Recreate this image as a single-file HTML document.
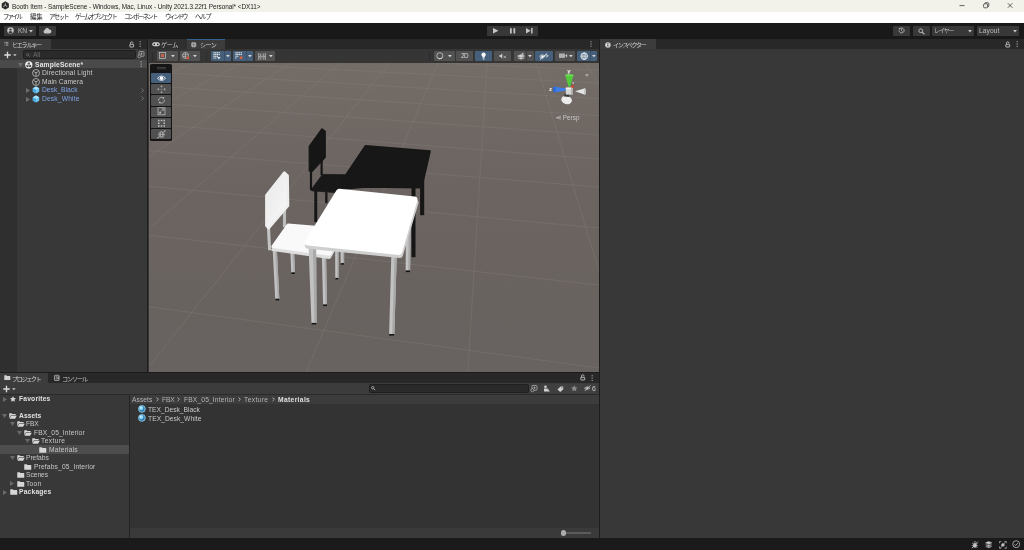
<!DOCTYPE html>
<html><head><meta charset="utf-8"><title>Booth Item - SampleScene - Unity</title>
<style>
*{box-sizing:border-box;margin:0;padding:0}
html,body{width:1024px;height:550px;overflow:hidden;background:#383838}
body{font-family:"Liberation Sans","Noto Sans CJK JP",sans-serif;font-size:6.4px;color:#c8c8c8;position:relative;line-height:1}
.a{position:absolute}
.t{position:absolute;white-space:nowrap;line-height:8px;height:8px;will-change:transform}
.k{letter-spacing:-1.7px}
.b{font-weight:bold}
svg{position:absolute;overflow:visible}
#title{left:0;top:0;width:1024px;height:11.600px;background:#f3f2ea}
#menu{left:0;top:11.600px;width:1024px;height:11.200px;background:#fff}
#menu .t{color:#1a1a1a}
#tb{left:0;top:22.800px;width:1024px;height:16.200px;background:#191919}
.btn{position:absolute;background:#383838;border-radius:1px}
.sb{position:absolute;background:#515151;border-radius:1px;top:11.800px;height:10.400px}
.blue{background:#46607c}
.tabbar{position:absolute;left:0;top:0;background:#282828;height:10px}
.tab{position:absolute;top:0;height:10px;background:#3c3c3c}
.ptb{position:absolute;background:#3c3c3c}
</style></head><body>
<div class="a" id="title">
<svg style="left:1.200px;top:1px" width="8.600" height="8.800" viewBox="0 0 18 18"><path d="M9 .5 L16.500 4.800 V13.200 L9 17.500 L1.500 13.200 V4.800Z" fill="#2a2a2a"/><path d="M9 9V4.500M9 9l4 2.300M9 9l-4 2.300" stroke="#ddd" stroke-width="1.600" fill="none"/></svg>
<div class="t" style="left:12.3px;top:2.8px;font-size:6.4px;letter-spacing:-0.048px;color:#1c1c1c;">Booth Item - SampleScene - Windows, Mac, Linux - Unity 2021.3.22f1 Personal* &lt;DX11&gt;</div>
<svg style="left:955px;top:0" width="69" height="12" viewBox="0 0 69 12"><g stroke="#222" stroke-width=".7" fill="none"><path d="M4.500 5.600h5"/><rect x="28.600" y="3.800" width="4" height="4" rx="1"/><path d="M29.800 3.800v-.3q0-.8.8-.8h2.300q.9 0 .9.900v2.300q0 .8-.8.8h-.4"/><path d="M52.800 3.200l4.600 4.600M57.400 3.200l-4.600 4.600"/></g></svg>
</div>
<div class="a" id="menu">
<div class="t" style="left:2.7px;top:1.4px;font-size:6.4px;letter-spacing:-1.916px;color:#1a1a1a;">ファイル</div>
<div class="t" style="left:29.8px;top:1.4px;font-size:6.4px;letter-spacing:-0.091px;color:#1a1a1a;">編集</div>
<div class="t" style="left:49.4px;top:1.4px;font-size:6.4px;letter-spacing:-1.609px;color:#1a1a1a;">アセット</div>
<div class="t" style="left:75.2px;top:1.4px;font-size:6.4px;letter-spacing:-1.814px;color:#1a1a1a;">ゲームオブジェクト</div>
<div class="t" style="left:124px;top:1.4px;font-size:6.4px;letter-spacing:-1.719px;color:#1a1a1a;">コンポーネント</div>
<div class="t" style="left:165px;top:1.4px;font-size:6.4px;letter-spacing:-2.151px;color:#1a1a1a;">ウィンドウ</div>
<div class="t" style="left:194.8px;top:1.4px;font-size:6.4px;letter-spacing:-1.257px;color:#1a1a1a;">ヘルプ</div>
</div>
<div class="a" id="tb">
<div class="btn" style="left:4px;top:3px;width:32px;height:10px"></div>
<div class="btn" style="left:39px;top:3px;width:16.5px;height:10px"></div>
<div class="btn" style="left:487px;top:3px;width:16.6px;height:10px"></div>
<div class="btn" style="left:504px;top:3px;width:16.6px;height:10px"></div>
<div class="btn" style="left:521px;top:3px;width:16.6px;height:10px"></div>
<div class="btn" style="left:893px;top:3px;width:17px;height:10px"></div>
<div class="btn" style="left:913px;top:3px;width:16.5px;height:10px"></div>
<div class="btn" style="left:932px;top:3px;width:42px;height:10px"></div>
<div class="btn" style="left:977px;top:3px;width:42px;height:10px"></div>
<svg style="left:7px;top:4.500px" width="7" height="7" viewBox="0 0 14 14"><circle cx="7" cy="7" r="6.500" fill="#c4c4c4"/><circle cx="7" cy="5.200" r="2.300" fill="#383838"/><path d="M2.800 11q.8-3.200 4.200-3.200t4.200 3.200q-1.800 1.800-4.200 1.800t-4.200-1.800z" fill="#383838"/></svg>
<div class="t" style="left:17.7px;top:4.1px;font-size:6.7px;letter-spacing:-0.248px;color:#bdbdbd;">KN</div>
<svg style="left:29.300px;top:7px" width="4" height="2.400" viewBox="0 0 8 5"><path d="M0 0h8l-4 5z" fill="#c4c4c4"/></svg>
<svg style="left:42.800px;top:5.300px" width="8.600" height="5.400" viewBox="0 0 16 10"><path d="M4 10a3.200 3.200 0 0 1-.5-6.300A4.300 4.300 0 0 1 11.800 3 3.500 3.500 0 0 1 12.500 10z" fill="#c4c4c4"/></svg>
<svg style="left:492.500px;top:5.200px" width="5.500" height="5.600" viewBox="0 0 10 10"><path d="M0 0l10 5-10 5z" fill="#c4c4c4"/></svg>
<svg style="left:509.700px;top:5.200px" width="5.200" height="5.600" viewBox="0 0 10 10"><path d="M0 0h3.400v10h-3.400zM6.600 0h3.400v10h-3.400z" fill="#c4c4c4"/></svg>
<svg style="left:526px;top:5.200px" width="6.600" height="5.600" viewBox="0 0 12 10"><path d="M0 0l8.500 5-8.500 5zM9.300 0h2.700v10h-2.700z" fill="#c4c4c4"/></svg>
<svg style="left:898px;top:4.500px" width="7" height="7" viewBox="0 0 14 14"><path d="M2.200 7a5 5 0 1 0 1.500-3.600" fill="none" stroke="#c4c4c4" stroke-width="1.600"/><path d="M.8 2.200l3.600.2-.4 3.400z" fill="#c4c4c4"/><path d="M7 4v3.300l2.200 1.300" fill="none" stroke="#c4c4c4" stroke-width="1.400"/></svg>
<svg style="left:917.500px;top:4.800px" width="7" height="7" viewBox="0 0 14 14"><circle cx="5.500" cy="5.500" r="3.800" fill="none" stroke="#c4c4c4" stroke-width="1.700"/><path d="M8.300 8.300l4.500 4.500" stroke="#c4c4c4" stroke-width="2.200"/></svg>
<div class="t" style="left:934.2px;top:4px;font-size:6.4px;letter-spacing:-1.694px;color:#bdbdbd;">レイヤー</div>
<svg style="left:968px;top:7px" width="4" height="2.400" viewBox="0 0 8 5"><path d="M0 0h8l-4 5z" fill="#c4c4c4"/></svg>
<div class="t" style="left:978.9px;top:4.1px;font-size:6.7px;letter-spacing:0.051px;color:#bdbdbd;">Layout</div>
<svg style="left:1013px;top:7px" width="4" height="2.400" viewBox="0 0 8 5"><path d="M0 0h8l-4 5z" fill="#c4c4c4"/></svg>
</div>
<div class="a" id="hier" style="left:0;top:39px;width:147.200px;height:333.200px;background:#383838">
<div class="tabbar" style="width:147.200px"><div class="tab" style="left:0;width:50.800px"></div></div>
<svg style="left:4.200px;top:3.400px" width="4.400" height="3.600" viewBox="0 0 11 9"><path d="M0 1h2M3.500 1h7.500M1.500 4.500h1.500M4.500 4.500h6.500M1.500 8h1.500M4.500 8h6.500" stroke="#c4c4c4" stroke-width="1.700"/></svg>
<div class="t" style="left:11.5px;top:2.0px;font-size:6.1px;letter-spacing:-1.294px;color:#d0d0d0;">ヒエラルキー</div>
<svg style="left:128.8px;top:1.6px" width="5.400" height="6.600" viewBox="0 0 10 12"><path d="M2.800 5.800V3.600a2.300 2.300 0 0 1 4.600 0v.6" fill="none" stroke="#c4c4c4" stroke-width="1.500"/><rect x="1.600" y="6" width="7" height="5" rx=".6" fill="none" stroke="#c4c4c4" stroke-width="1.700"/></svg>
<svg style="left:139.3px;top:2px" width="2.300" height="6.200" viewBox="0 0 4 12"><rect x="1" y=".5" width="2" height="2" fill="#bdbdbd"/><rect x="1" y="5" width="2" height="2" fill="#bdbdbd"/><rect x="1" y="9.500" width="2" height="2" fill="#bdbdbd"/></svg>
<div class="ptb" style="left:0;top:10px;width:147.200px;height:11px"></div>
<svg style="left:3.7px;top:11.5px" width="13" height="8" viewBox="0 0 26 16"><path d="M7 1.500v13M.5 8h13" stroke="#dcdcdc" stroke-width="2.700" fill="none"/><path d="M18 6.300h7.400l-3.700 4.200z" fill="#c4c4c4"/></svg>
<div class="a" style="left:23px;top:11.200px;width:112.800px;height:8.600px;background:#2a2a2a;border:.5px solid #1f1f1f;border-radius:1.500px"></div>
<svg style="left:25.500px;top:13.500px" width="5" height="4.500" viewBox="0 0 10 9"><circle cx="3.200" cy="3.200" r="2.300" fill="none" stroke="#7a7a7a" stroke-width="1.300"/><path d="M5 5l2.500 2.500" stroke="#7a7a7a" stroke-width="1.500"/><path d="M7.300 3.500h2.700l-1.350 1.600z" fill="#7a7a7a"/></svg>
<div class="t" style="left:33.2px;top:11.9px;font-size:6.7px;letter-spacing:-0.146px;color:#6e6e6e;">All</div>
<svg style="left:137px;top:11.500px" width="7.500" height="7.500" viewBox="0 0 15 15"><rect x="4" y="1" width="10" height="9.500" rx="1.500" fill="none" stroke="#bdbdbd" stroke-width="1.400"/><circle cx="4.800" cy="10.500" r="3" fill="#3c3c3c" stroke="#bdbdbd" stroke-width="1.300"/><path d="M9 3v5M6.500 5.500h5" stroke="#bdbdbd" stroke-width="1.200"/></svg>
<div class="a" style="left:0;top:21px;width:17px;height:312.500px;background:#2f2f2f"></div>
<div class="a" style="left:0;top:21px;width:147.200px;height:8.300px;background:#4a4a4a"></div>
<svg style="left:18.3px;top:23.6px" width="5" height="4" viewBox="0 0 10 8"><path d="M0 0h10l-5 8z" fill="#6e6e6e"/></svg>
<svg style="left:24.900px;top:21.500px" width="7.600" height="7.600" viewBox="0 0 16 16"><circle cx="8" cy="8" r="7.600" fill="#f2f2f2"/><g fill="#2e2e2e"><path d="M8 8.300L5.700 7V4.300L8 2.800 10.300 4.300V7z"/><path d="M7.600 9L5.300 7.700 3 9v2.700l2.300 1.300 2.300-1.300z" /><path d="M8.400 9l2.300-1.300L13 9v2.700l-2.300 1.300-2.300-1.300z"/></g><path d="M8 3.500v4.500M8 8l-3.800 2.300M8 8l3.800 2.300" stroke="#f2f2f2" stroke-width=".9"/></svg>
<div class="t b" style="left:34.9px;top:21.9px;font-size:6.7px;letter-spacing:0.183px;color:#e4e4e4;">SampleScene*</div>
<svg style="left:139.6px;top:22.4px" width="2.300" height="6.200" viewBox="0 0 4 12"><rect x="1" y=".5" width="2" height="2" fill="#bdbdbd"/><rect x="1" y="5" width="2" height="2" fill="#bdbdbd"/><rect x="1" y="9.500" width="2" height="2" fill="#bdbdbd"/></svg>
<svg style="left:32px;top:30.2px" width="8" height="8" viewBox="0 0 16 16"><circle cx="8" cy="8" r="7" fill="none" stroke="#c4c4c4" stroke-width="1.500"/><path d="M3 5l5 2.500 5-2.500M8 7.500v6.500" fill="none" stroke="#c4c4c4" stroke-width="1.500"/></svg>
<div class="t" style="left:41.6px;top:30.4px;font-size:6.7px;letter-spacing:0.156px;color:#c8c8c8;">Directional Light</div>
<svg style="left:32px;top:38.73px" width="8" height="8" viewBox="0 0 16 16"><circle cx="8" cy="8" r="7" fill="none" stroke="#c4c4c4" stroke-width="1.500"/><path d="M3 5l5 2.500 5-2.500M8 7.500v6.500" fill="none" stroke="#c4c4c4" stroke-width="1.500"/></svg>
<div class="t" style="left:41.6px;top:38.93px;font-size:6.7px;letter-spacing:0.078px;color:#c8c8c8;">Main Camera</div>
<svg style="left:26.4px;top:49.16px" width="4" height="5" viewBox="0 0 8 10"><path d="M0 0l8 5-8 5z" fill="#6e6e6e"/></svg>
<svg style="left:32px;top:47.26px" width="8" height="8" viewBox="0 0 16 16"><path d="M8 .8l6.400 3.600v7.200L8 15.200 1.600 11.600V4.400z" fill="#6fc6f0"/><path d="M8 .8l6.400 3.600L8 8 1.600 4.400z" fill="#a9e2ff"/><path d="M8 8v7.200l-6.400-3.600V4.400z" fill="#4aa8dc"/></svg>
<div class="t" style="left:41.6px;top:47.46px;font-size:6.7px;letter-spacing:0.029px;color:#7ea2e4;">Desk_Black</div>
<svg style="left:141.300px;top:48.96px" width="3" height="5" viewBox="0 0 6 10"><path d="M1 1l4 4-4 4" fill="none" stroke="#8a8a8a" stroke-width="1.400"/></svg>
<svg style="left:26.4px;top:57.69px" width="4" height="5" viewBox="0 0 8 10"><path d="M0 0l8 5-8 5z" fill="#6e6e6e"/></svg>
<svg style="left:32px;top:55.79px" width="8" height="8" viewBox="0 0 16 16"><path d="M8 .8l6.400 3.600v7.200L8 15.200 1.600 11.600V4.400z" fill="#6fc6f0"/><path d="M8 .8l6.400 3.600L8 8 1.600 4.400z" fill="#a9e2ff"/><path d="M8 8v7.200l-6.400-3.600V4.400z" fill="#4aa8dc"/></svg>
<div class="t" style="left:41.6px;top:55.99px;font-size:6.7px;letter-spacing:0.154px;color:#7ea2e4;">Desk_White</div>
<svg style="left:141.300px;top:57.49px" width="3" height="5" viewBox="0 0 6 10"><path d="M1 1l4 4-4 4" fill="none" stroke="#8a8a8a" stroke-width="1.400"/></svg>
</div>
<div class="a" style="left:147.200px;top:39px;width:1.300px;height:334px;background:#1c1c1c"></div>
<div class="a" id="scene" style="left:148.500px;top:39px;width:450.500px;height:333.200px;background:#383838;overflow:hidden">
<div class="tabbar" style="width:450.500px"><div class="tab" style="left:0;width:38.500px;background:#2f2f2f"></div><div class="tab" style="left:38.500px;width:37.500px"></div><div class="a" style="left:38.500px;top:-.3px;width:37.500px;height:1.100px;background:#33628f"></div></div>
<svg style="left:3.500px;top:3.300px" width="8" height="4.600" viewBox="0 0 16 9"><rect x=".5" y=".5" width="15" height="8" rx="4" fill="#d0d0d0"/><circle cx="4.600" cy="4.500" r="1.700" fill="#2f2f2f"/><circle cx="11.400" cy="4.500" r="1.700" fill="#2f2f2f"/></svg>
<div class="t" style="left:12.4px;top:2.0px;font-size:6.1px;letter-spacing:-0.370px;color:#c8c8c8;">ゲーム</div>
<svg style="left:42.300px;top:2.600px" width="5.600" height="5.600" viewBox="0 0 12 12"><g fill="none" stroke="#c8c8c8" stroke-width="1.300"><rect x="2" y="2" width="8" height="8"/><path d="M0 4h12M0 8h12M4 0v12M8 0v12"/></g></svg>
<div class="t" style="left:51px;top:2.0px;font-size:6.1px;letter-spacing:-0.561px;color:#d8d8d8;">シーン</div>
<svg style="left:441.700px;top:2px" width="2" height="6" viewBox="0 0 4 12"><rect x="1" y=".5" width="2" height="2" fill="#bdbdbd"/><rect x="1" y="5" width="2" height="2" fill="#bdbdbd"/><rect x="1" y="9.500" width="2" height="2" fill="#bdbdbd"/></svg>
<div class="a" style="left:0;top:10px;width:450.500px;height:13.800px;background:#353535"></div>
<div class="a" style="left:3px;top:12.500px;width:3px;height:9px;background:repeating-linear-gradient(90deg,#2b2b2b 0 .8px,transparent .8px 1.600px)"></div>
<div class="a" style="left:57px;top:12.500px;width:3px;height:9px;background:repeating-linear-gradient(90deg,#2b2b2b 0 .8px,transparent .8px 1.600px)"></div>
<div class="a" style="left:280.500px;top:12.500px;width:3px;height:9px;background:repeating-linear-gradient(90deg,#2b2b2b 0 .8px,transparent .8px 1.600px)"></div>
<div class="sb" style="left:8.5px;width:20.8px"></div>
<div class="sb" style="left:31.2px;width:20.3px"></div>
<div class="sb blue" style="left:62.5px;width:20.0px"></div>
<div class="sb blue" style="left:84.5px;width:20.0px"></div>
<div class="sb" style="left:106.5px;width:20.0px"></div>
<svg style="left:10.800px;top:13.400px" width="7" height="7" viewBox="0 0 14 14"><rect x="1" y="1" width="12" height="12" fill="none" stroke="#d0d0d0" stroke-width="1.300"/><rect x="4.300" y="4.300" width="5.400" height="5.400" fill="#c4553c" stroke="#d87a60" stroke-width="1"/></svg>
<svg style="left:22.5px;top:16px" width="3.800" height="2.300" viewBox="0 0 8 5"><path d="M0 0h8l-4 5z" fill="#d8d8d8"/></svg>
<svg style="left:33.200px;top:13.200px" width="8" height="8" viewBox="0 0 16 16"><circle cx="7" cy="7" r="6" fill="none" stroke="#d0d0d0" stroke-width="1.300"/><path d="M7 1v12M1.200 5.500h11.600M1.500 9h7" stroke="#d0d0d0" stroke-width="1.100" fill="none"/><circle cx="11.500" cy="11.500" r="3" fill="#cf5a3c"/></svg>
<svg style="left:44.7px;top:16px" width="3.800" height="2.300" viewBox="0 0 8 5"><path d="M0 0h8l-4 5z" fill="#d8d8d8"/></svg>
<svg style="left:64.800px;top:13.300px" width="8" height="8" viewBox="0 0 16 16"><g fill="#ececec"><rect x="1.0" y="0.5" width="2" height="2"/><rect x="4.6" y="0.5" width="2" height="2"/><rect x="8.2" y="0.5" width="2" height="2"/><rect x="11.8" y="0.5" width="2" height="2"/><rect x="1.0" y="4.1" width="2" height="2"/><rect x="4.6" y="4.1" width="2" height="2"/><rect x="8.2" y="4.1" width="2" height="2"/><rect x="11.8" y="4.1" width="2" height="2"/><rect x="1.0" y="7.7" width="2" height="2"/><rect x="4.6" y="7.7" width="2" height="2"/><rect x="8.2" y="7.7" width="2" height="2"/><rect x="1.0" y="11.3" width="2" height="2"/><rect x="4.6" y="11.3" width="2" height="2"/></g><path d="M1.500 1.500h12M1.500 5h12M1.500 8.700h8M2 1v11M5.600 1v11M9.200 1v8" stroke="#ececec" stroke-width=".6" fill="none"/><path d="M8.500 10h6.500l-3.250 5z" fill="#ececec"/></svg>
<div class="a" style="left:75.3px;top:11.800px;width:.7px;height:10.400px;background:#3a4f66"></div>
<svg style="left:77.0px;top:16px" width="3.800" height="2.300" viewBox="0 0 8 5"><path d="M0 0h8l-4 5z" fill="#d8d8d8"/></svg>
<svg style="left:86.800px;top:13.300px" width="8" height="8" viewBox="0 0 16 16"><g fill="#ececec"><rect x="1.0" y="0.5" width="2" height="2"/><rect x="4.6" y="0.5" width="2" height="2"/><rect x="8.2" y="0.5" width="2" height="2"/><rect x="11.8" y="0.5" width="2" height="2"/><rect x="1.0" y="4.1" width="2" height="2"/><rect x="4.6" y="4.1" width="2" height="2"/><rect x="8.2" y="4.1" width="2" height="2"/><rect x="11.8" y="4.1" width="2" height="2"/><rect x="1.0" y="7.7" width="2" height="2"/><rect x="4.6" y="7.7" width="2" height="2"/><rect x="1.0" y="11.3" width="2" height="2"/></g><path d="M1.500 1.500h12M1.500 5h12M2 1v11M5.600 1v8" stroke="#ececec" stroke-width=".6" fill="none"/><path d="M8.500 9.500a3.500 3.500 0 1 0 7 0h-2a1.500 1.500 0 1 1-3 0z" fill="#d8603f" transform="rotate(-45 12 10.500)"/><circle cx="12" cy="11.500" r="2.600" fill="#d8603f"/></svg>
<div class="a" style="left:97.3px;top:11.800px;width:.7px;height:10.400px;background:#3a4f66"></div>
<svg style="left:99.0px;top:16px" width="3.800" height="2.300" viewBox="0 0 8 5"><path d="M0 0h8l-4 5z" fill="#d8d8d8"/></svg>
<svg style="left:109px;top:13.600px" width="8" height="7" viewBox="0 0 16 14"><path d="M1.500 0v14M14.500 0v14M5.500 1v5M10.500 1v5M1.500 7.500h13M5.500 9v4M10.500 9v4" stroke="#d0d0d0" stroke-width="1.500" fill="none"/></svg>
<svg style="left:120.3px;top:16px" width="3.800" height="2.300" viewBox="0 0 8 5"><path d="M0 0h8l-4 5z" fill="#d8d8d8"/></svg>
<div class="sb" style="left:285.2px;width:20.9px"></div>
<div class="sb" style="left:307.7px;width:16.6px"></div>
<div class="sb blue" style="left:326.7px;width:17.1px"></div>
<div class="sb" style="left:345.9px;width:16.9px"></div>
<div class="sb" style="left:365.3px;width:20.0px"></div>
<div class="sb blue" style="left:386.9px;width:17.4px"></div>
<div class="sb" style="left:406.3px;width:20.5px"></div>
<div class="sb blue" style="left:428.4px;width:19.9px"></div>
<svg style="left:287.500px;top:13.200px" width="7.600" height="7.600" viewBox="0 0 16 16"><circle cx="8" cy="8" r="6.500" fill="none" stroke="#d8d8d8" stroke-width="1.500"/><path d="M3 10.500a5.500 5.500 0 0 0 10-1 5 5 0 0 1-10 1z" fill="#d8d8d8"/></svg>
<svg style="left:299.7px;top:16px" width="3.800" height="2.300" viewBox="0 0 8 5"><path d="M0 0h8l-4 5z" fill="#d8d8d8"/></svg>
<div class="t" style="left:312.6px;top:13px;font-size:6.4px;letter-spacing:-0.586px;color:#d8d8d8;">2D</div>
<svg style="left:332.800px;top:13px" width="5.200" height="8" viewBox="0 0 10 16"><path d="M5 .8a4.300 4.300 0 0 1 2.400 7.900v2.300h-4.800v-2.300A4.300 4.300 0 0 1 5 .8z" fill="#fff"/><path d="M3 12.500h4M3.500 14.500h3" stroke="#fff" stroke-width="1.300"/></svg>
<svg style="left:350.500px;top:13.800px" width="8" height="7" viewBox="0 0 16 14"><path d="M1 4h2.500l3-3v10l-3-3h-2.500z" fill="#d0d0d0"/><path d="M9 5.500l5 5M14 5.500l-5 5" stroke="#d0d0d0" stroke-width="1.300"/></svg>
<svg style="left:368.500px;top:13.300px" width="8" height="8" viewBox="0 0 16 16"><path d="M1 8l7-3 7 3-7 3zM1 11.500l7 3 7-3" fill="#d0d0d0" stroke="#d0d0d0" stroke-width="1"/><path d="M11.500 1l.8 1.800 1.900.2-1.400 1.300.4 1.900-1.700-1-1.700 1 .4-1.900-1.400-1.300 1.900-.2z" fill="#d0d0d0"/></svg>
<div class="a" style="left:377.5px;top:11.800px;width:.7px;height:10.400px;background:#3a3a3a"></div>
<svg style="left:379.7px;top:16px" width="3.800" height="2.300" viewBox="0 0 8 5"><path d="M0 0h8l-4 5z" fill="#d8d8d8"/></svg>
<svg style="left:390.500px;top:13.600px" width="10" height="7" viewBox="0 0 20 14"><path d="M1.500 7q5-6.500 10 0-5 6.500-10 0z" fill="none" stroke="#fff" stroke-width="1.500"/><circle cx="6.500" cy="7" r="2" fill="#fff"/><path d="M2 13l14-12" stroke="#fff" stroke-width="1.700"/><path d="M13 4.500q3-1 5.500 1-2 3-5 2.500" fill="none" stroke="#fff" stroke-width="1.300"/></svg>
<svg style="left:410px;top:14.400px" width="8.400" height="5.400" viewBox="0 0 17 11"><rect x=".5" y="1" width="3" height="9" fill="#d0d0d0"/><rect x="4.500" y="1" width="3" height="9" fill="#d0d0d0"/><rect x="8.500" y="1" width="3" height="9" fill="#d0d0d0"/><path d="M12.500 5.500l4-3.500v7z" fill="#d0d0d0"/></svg>
<svg style="left:420.8px;top:16px" width="3.800" height="2.300" viewBox="0 0 8 5"><path d="M0 0h8l-4 5z" fill="#d8d8d8"/></svg>
<svg style="left:431.500px;top:13px" width="8.400" height="8.400" viewBox="0 0 16 16"><circle cx="8" cy="8" r="6.300" fill="none" stroke="#fff" stroke-width="1.600"/><path d="M8 1.500v13M1.500 8h13" stroke="#fff" stroke-width="1.200"/><ellipse cx="8" cy="8" rx="3" ry="6.300" fill="none" stroke="#fff" stroke-width="1.100"/></svg>
<div class="a" style="left:441.2px;top:11.800px;width:.7px;height:10.400px;background:#3a4f66"></div>
<svg style="left:443.1px;top:16px" width="3.800" height="2.300" viewBox="0 0 8 5"><path d="M0 0h8l-4 5z" fill="#d8d8d8"/></svg>
<div class="a" id="vp" style="left:0;top:23.800px;width:450.500px;height:309.400px;background:linear-gradient(#736c67,#6b6460 40%,#686260)">
<svg style="left:0;top:0;overflow:hidden" width="450.500" height="309.400" viewBox="0 0 450.500 309.400"><g stroke="#8a837d" stroke-width=".6" opacity=".55"><line x1="484.4" y1="-0.8" x2="804.6" y2="310.2"/><line x1="435.7" y1="-0.8" x2="642.6" y2="310.2"/><line x1="386.9" y1="-0.8" x2="480.7" y2="310.2"/><line x1="338.1" y1="-0.8" x2="318.7" y2="310.2"/><line x1="289.4" y1="-0.8" x2="156.7" y2="310.2"/><line x1="240.6" y1="-0.8" x2="-5.2" y2="310.2"/><line x1="191.8" y1="-0.8" x2="-167.2" y2="310.2"/><line x1="143.0" y1="-0.8" x2="-329.2" y2="310.2"/><line x1="94.3" y1="-0.8" x2="-491.1" y2="310.2"/><line x1="45.5" y1="-0.8" x2="-653.1" y2="310.2"/><line x1="-3.3" y1="-0.8" x2="-815.1" y2="310.2"/><line x1="-52.1" y1="-0.8" x2="-977.0" y2="310.2"/><line x1="-0.5" y1="-12.8" x2="451.5" y2="7.2"/><line x1="-0.5" y1="-2.9" x2="451.5" y2="20.2"/><line x1="-0.5" y1="8.8" x2="451.5" y2="35.8"/><line x1="-0.5" y1="22.8" x2="451.5" y2="52.7"/><line x1="-0.5" y1="39.8" x2="451.5" y2="72.2"/><line x1="-0.5" y1="60.9" x2="451.5" y2="96.2"/><line x1="-0.5" y1="87.7" x2="451.5" y2="124.2"/><line x1="-0.5" y1="123.2" x2="451.5" y2="165.2"/><line x1="-0.5" y1="172.2" x2="451.5" y2="222.2"/><line x1="-0.5" y1="243.7" x2="451.5" y2="305.2"/><line x1="-0.5" y1="358.8" x2="451.5" y2="439.2"/></g>
<g><rect x="165.3" y="127.2" width="2.9" height="32.0" fill="#161616" /><rect x="176.2" y="129.2" width="2.3" height="11.0" fill="#161616" /><rect x="160.9" y="107.2" width="2.2" height="20.0" fill="#161616" /><rect x="171.5" y="93.2" width="2.2" height="19.0" fill="#161616" /><polygon points="160.1,83.2 172.8,65.6 176.3,68.0 176.3,94.7 161.9,110.0 160.1,107.7" fill="#161616" stroke="#161616" stroke-width="1" stroke-linejoin="round"/><polygon points="162.7,126.0 173.5,111.4 198.5,111.8 189.5,127.7 185.5,129.5 162.7,127.8" fill="#181818" stroke="#181818" stroke-width=".8" stroke-linejoin="round"/><rect x="271.1" y="117.2" width="4.1" height="35.0" fill="#161616" /><rect x="262.5" y="123.2" width="4.0" height="71.0" fill="#161616" /><polygon points="216.5,82.8 281.1,88.1 272.7,124.8 217.5,124.0 190.5,126.2 197.0,111.6" fill="#171717" stroke="#171717" stroke-width="1.600" stroke-linejoin="round"/><polygon points="141.3,187.2 145.1,187.2 145.9,210.6 142.3,210.6" fill="#c2c2c2" /><polygon points="143.5,187.2 145.1,187.2 145.9,210.6 144.4,210.6" fill="#a9a9a9" /><polygon points="142.3,209.3 145.9,209.3 145.9,211.0 142.3,211.0" fill="#141414" /><polygon points="186.1,183.2 189.5,183.2 189.5,216.2 186.3,216.2" fill="#c2c2c2" /><polygon points="188.1,183.2 189.5,183.2 189.5,216.2 188.2,216.2" fill="#a9a9a9" /><polygon points="186.3,214.9 189.5,214.9 189.5,216.6 186.3,216.6" fill="#141414" /><polygon points="123.7,187.2 127.9,187.2 130.4,237.0 126.3,237.0" fill="#c2c2c2" /><polygon points="126.1,187.2 127.9,187.2 130.4,237.0 128.7,237.0" fill="#a9a9a9" /><polygon points="126.3,235.7 130.4,235.7 130.4,237.4 126.3,237.4" fill="#141414" /><polygon points="172.9,193.2 177.1,193.2 178.0,242.7 174.1,242.7" fill="#c2c2c2" /><polygon points="175.3,193.2 177.1,193.2 178.0,242.7 176.4,242.7" fill="#a9a9a9" /><polygon points="174.1,241.4 178.0,241.4 178.0,243.1 174.1,243.1" fill="#141414" /><polygon points="117.7,161.2 120.9,161.2 122.1,187.2 119.1,187.2" fill="#c4c4c4" /><rect x="133.9" y="141.2" width="3.2" height="23.0" fill="#bcbcbc" /><defs><linearGradient id="cb" x1="0" y1="0" x2="1" y2="1"><stop offset="0" stop-color="#e9e9e9"/><stop offset="1" stop-color="#f8f8f8"/></linearGradient></defs><polygon points="117.3,132.2 135.3,109.5 138.7,112.6 139.1,142.6 119.7,165.2 117.3,162.7" fill="url(#cb)" stroke="#eeeeee" stroke-width="2.400" stroke-linejoin="round"/><polygon points="123.8,186.6 138.8,165.6 194.1,169.7 180.5,194.4" fill="#dedede" stroke="#dedede" stroke-width="3" stroke-linejoin="round"/><polygon points="123.8,183.6 139.0,162.0 194.1,166.5 180.5,191.2" fill="#f9f9f9" stroke="#f9f9f9" stroke-width="3" stroke-linejoin="round"/><polygon points="191.5,183.2 195.1,183.2 195.1,201.4 191.7,201.4" fill="#c2c2c2" /><polygon points="193.6,183.2 195.1,183.2 195.1,201.4 193.7,201.4" fill="#a9a9a9" /><polygon points="191.7,200.1 195.1,200.1 195.1,201.8 191.7,201.8" fill="#141414" /><polygon points="257.1,152.2 261.9,152.2 261.1,208.7 256.6,208.7" fill="#c2c2c2" /><polygon points="259.9,152.2 261.9,152.2 261.1,208.7 259.2,208.7" fill="#a9a9a9" /><polygon points="256.6,207.4 261.1,207.4 261.1,209.1 256.6,209.1" fill="#141414" /><polygon points="159.5,181.2 167.1,181.2 167.6,261.2 162.5,261.2" fill="#c2c2c2" /><polygon points="163.9,181.2 167.1,181.2 167.6,261.2 165.5,261.2" fill="#a9a9a9" /><polygon points="162.5,259.9 167.6,259.9 167.6,261.6 162.5,261.6" fill="#141414" /><polygon points="242.4,189.2 247.9,189.2 245.3,272.3 240.1,272.3" fill="#c2c2c2" /><polygon points="245.6,189.2 247.9,189.2 245.3,272.3 243.1,272.3" fill="#a9a9a9" /><polygon points="240.1,271.0 245.3,271.0 245.3,272.7 240.1,272.7" fill="#141414" /><polygon points="190.2,131.9 266.3,139.6 250.8,191.9 159.2,182.5" fill="#cfcfcf" stroke="#cfcfcf" stroke-width="6.400" stroke-linejoin="round"/><polygon points="190.2,128.9 265.3,136.6 250.0,188.7 159.2,179.3" fill="#ffffff" stroke="#ffffff" stroke-width="6.400" stroke-linejoin="round"/></g>
</svg>
<div class="a" style="left:1.4px;top:1.4px;width:22.400px;height:76.600px;background:#151515;border-radius:1.600px"></div><div class="a" style="left:8.5px;top:4.2px;width:8.600px;height:.8px;background:#3e3e3e;box-shadow:0 1.400px 0 #3e3e3e"></div><div class="a" style="left:2.6px;top:10.3px;width:20.100px;height:10.100px;background:#46607c;border-radius:.8px"></div><div class="a" style="left:2.6px;top:21.5px;width:20.100px;height:10.100px;background:#515151;border-radius:.8px"></div><div class="a" style="left:2.6px;top:32.7px;width:20.100px;height:10.100px;background:#515151;border-radius:.8px"></div><div class="a" style="left:2.6px;top:43.9px;width:20.100px;height:10.100px;background:#515151;border-radius:.8px"></div><div class="a" style="left:2.6px;top:55.1px;width:20.100px;height:10.100px;background:#515151;border-radius:.8px"></div><div class="a" style="left:2.6px;top:66.3px;width:20.100px;height:10.100px;background:#515151;border-radius:.8px"></div><svg style="left:8.2px;top:11.1px" width="9" height="8.500" viewBox="0 0 18 17"><path d="M1 8.500q8-9 16 0-8 9-16 0z" fill="none" stroke="#fff" stroke-width="1.600"/><circle cx="9" cy="8.500" r="3.600" fill="#fff"/></svg><svg style="left:8.2px;top:22.3px" width="9" height="8.500" viewBox="0 0 18 17"><g fill="#bdbdbd"><path d="M9 .5l2.600 3.200h-5.200zM9 16.500l2.600-3.200h-5.200zM.5 8.500l3.200-2.600v5.200zM17.500 8.500l-3.200-2.600v5.200z"/><path d="M8.400 4h1.200v9h-1.200zM4 7.900h10v1.200h-10z" opacity=".35"/></g></svg><svg style="left:8.2px;top:33.5px" width="9" height="8.500" viewBox="0 0 18 17"><g fill="none" stroke="#bdbdbd" stroke-width="1.600"><path d="M3.200 9.500a5.800 5.800 0 0 1 9.500-5.300"/><path d="M14.800 7.500a5.800 5.800 0 0 1-9.500 5.300"/></g><path d="M11 1.500l3.800 2-2.800 3z" fill="#bdbdbd"/><path d="M7 15.500l-3.800-2 2.800-3z" fill="#bdbdbd"/></svg><svg style="left:8.2px;top:44.7px" width="9" height="8.500" viewBox="0 0 18 17"><rect x="2" y="1.500" width="14" height="14" fill="none" stroke="#bdbdbd" stroke-width="1.500"/><rect x="4.500" y="9.500" width="3.600" height="3.600" fill="#bdbdbd"/><path d="M8 9l5-5M9.500 3.800h3.700v3.700" fill="none" stroke="#bdbdbd" stroke-width="1.400"/></svg><svg style="left:8.2px;top:55.9px" width="9" height="8.500" viewBox="0 0 18 17"><g fill="#bdbdbd"><rect x="2" y="1.500" width="3" height="3"/><rect x="7.500" y="1.500" width="3" height="3"/><rect x="13" y="1.500" width="3" height="3"/><rect x="2" y="7" width="3" height="3"/><rect x="13" y="7" width="3" height="3"/><rect x="2" y="12.500" width="3" height="3"/><rect x="7.500" y="12.500" width="3" height="3"/><rect x="13" y="12.500" width="3" height="3"/></g><path d="M3.500 3v11h11v-11z" fill="none" stroke="#bdbdbd" stroke-width=".5" opacity=".6"/></svg><svg style="left:8.2px;top:67.1px" width="9" height="8.500" viewBox="0 0 18 17"><g fill="none" stroke="#bdbdbd" stroke-width="1.400"><circle cx="9" cy="9" r="5.500"/><ellipse cx="9" cy="9" rx="2.500" ry="5.500"/><path d="M3.500 9h11M2 15.500l3-2.500M13 4l3-2.500"/></g><circle cx="16" cy="2" r="1.300" fill="#bdbdbd"/><circle cx="2" cy="15.500" r="1.300" fill="#bdbdbd"/></svg><svg style="left:391.5px;top:-0.8px;will-change:transform" width="60" height="65" viewBox="0 0 60 65"><ellipse cx="26.600" cy="38" rx="5.400" ry="4.100" fill="#ececec" transform="rotate(12 26.600 38)"/><path d="M25 31l3.500 0 1 4-5.500-.5z" fill="#3a3a3a"/><path d="M14 24.400q-1.200 3 .5 6.200l11.500-2.200v-2z" fill="#3f7ee8"/><ellipse cx="14.300" cy="27.500" rx="1.300" ry="3.100" fill="#2f68cc"/><path d="M25.200 13.300q4.200-1.200 8.400 0l-3.600 11.700h-1.400z" fill="#52c93c"/><ellipse cx="29.400" cy="13.300" rx="4.200" ry="1" fill="#6ae052"/><path d="M35 29.200l10-3v6.600z" fill="#e4e4e4"/><ellipse cx="45" cy="29.500" rx="1" ry="3.300" fill="#c4c4c4"/><rect x="25.800" y="25.600" width="6.800" height="7" fill="#d6d6d6"/><rect x="25.800" y="25.600" width="6.800" height="1.600" fill="#eeeeee"/><rect x="31" y="25.600" width="1.600" height="7" fill="#b0b0b0"/><path d="M30.500 24.500l3.600-1.800 0 2.300-2 1z" fill="#d9402c"/><text x="27.200" y="10.600" font-size="6.200" font-weight="bold" fill="#f4f4f4" font-family="Liberation Sans,sans-serif">y</text><text x="9" y="29" font-size="6.200" font-weight="bold" fill="#f4f4f4" font-family="Liberation Sans,sans-serif">z</text><text x="32.200" y="21.600" font-size="3.600" fill="#f0f0f0" font-family="Liberation Sans,sans-serif">x</text><path d="M45.500 12.600h2.800M45.500 13.800h2.800" stroke="#c8c8c8" stroke-width=".7"/><path d="M21 54l-4.600 1.700 4.600 1.700M21 55.700h-4.600" fill="none" stroke="#c4c4c4" stroke-width=".6"/><text x="22.800" y="58" font-size="6.400" fill="#c8c8c8" font-family="Liberation Sans,sans-serif">Persp</text></svg>
</div>
</div>
<div class="a" id="insp" style="left:600.300px;top:39px;width:423.700px;height:499px;background:#383838">
<div class="tabbar" style="width:423.700px"><div class="tab" style="left:0;width:55.800px"></div></div>
<svg style="left:4.600px;top:2.600px" width="5.800" height="5.800" viewBox="0 0 12 12"><circle cx="6" cy="6" r="5.700" fill="#d6d6d6"/><rect x="5" y="5" width="2" height="4.500" fill="#3c3c3c"/><rect x="5" y="2.300" width="2" height="1.800" fill="#3c3c3c"/></svg>
<div class="t" style="left:12.4px;top:2.0px;font-size:6.1px;letter-spacing:-1.325px;color:#d0d0d0;">インスペクター</div>
<svg style="left:404.5px;top:1.6px" width="5.400" height="6.600" viewBox="0 0 10 12"><path d="M2.800 5.800V3.600a2.300 2.300 0 0 1 4.600 0v.6" fill="none" stroke="#c4c4c4" stroke-width="1.500"/><rect x="1.600" y="6" width="7" height="5" rx=".6" fill="none" stroke="#c4c4c4" stroke-width="1.700"/></svg>
<svg style="left:415.3px;top:2px" width="2.300" height="6.200" viewBox="0 0 4 12"><rect x="1" y=".5" width="2" height="2" fill="#bdbdbd"/><rect x="1" y="5" width="2" height="2" fill="#bdbdbd"/><rect x="1" y="9.500" width="2" height="2" fill="#bdbdbd"/></svg>
</div>
<div class="a" style="left:599px;top:39px;width:1.300px;height:499px;background:#1c1c1c"></div>
<div class="a" style="left:0;top:372.200px;width:599px;height:.8px;background:#1c1c1c"></div>
<div class="a" id="proj" style="left:0;top:372.800px;width:599px;height:165.200px;background:#383838">
<div class="tabbar" style="width:599px;height:9.800px"><div class="tab" style="left:0;width:48.300px;height:9.800px"></div></div>
<svg style="left:3.500px;top:2.600px" width="6.600" height="5.200" viewBox="0 0 15 12"><path d="M.5 1.200q0-.7.700-.7h4.300l1.300 1.700h7q.7 0 .7.700v7.900q0 .7-.7.700h-12.600q-.7 0-.7-.7z" fill="#d0d0d0"/></svg>
<div class="t" style="left:12.2px;top:2.4px;font-size:6.1px;letter-spacing:-1.360px;color:#d0d0d0;">プロジェクト</div>
<svg style="left:53.500px;top:2.200px" width="5.600" height="5.800" viewBox="0 0 11 12"><rect x=".7" y=".7" width="9.600" height="10.600" rx="1" fill="none" stroke="#d0d0d0" stroke-width="1.400"/><path d="M3 3.500h3M3 6h3M3 8.500h3" stroke="#d0d0d0" stroke-width="1.200"/><rect x="7" y="3" width="2.300" height="6" fill="#d0d0d0"/></svg>
<div class="t" style="left:61.6px;top:2.4px;font-size:6.1px;letter-spacing:-1.094px;color:#c4c4c4;">コンソール</div>
<svg style="left:580.3px;top:1.5px" width="5.400" height="6.600" viewBox="0 0 10 12"><path d="M2.800 5.800V3.600a2.300 2.300 0 0 1 4.600 0v.6" fill="none" stroke="#c4c4c4" stroke-width="1.500"/><rect x="1.600" y="6" width="7" height="5" rx=".6" fill="none" stroke="#c4c4c4" stroke-width="1.700"/></svg>
<svg style="left:590.8px;top:1.9px" width="2.300" height="6.200" viewBox="0 0 4 12"><rect x="1" y=".5" width="2" height="2" fill="#bdbdbd"/><rect x="1" y="5" width="2" height="2" fill="#bdbdbd"/><rect x="1" y="9.500" width="2" height="2" fill="#bdbdbd"/></svg>
<div class="ptb" style="left:0;top:9.800px;width:599px;height:11.800px"></div>
<svg style="left:3.4px;top:12.1px" width="13" height="8" viewBox="0 0 26 16"><path d="M7 1.500v13M.5 8h13" stroke="#dcdcdc" stroke-width="2.700" fill="none"/><path d="M18 6.300h7.400l-3.700 4.200z" fill="#c4c4c4"/></svg>
<div class="a" style="left:368.500px;top:11.400px;width:160px;height:8.700px;background:#2a2a2a;border:.5px solid #1f1f1f;border-radius:1.500px"></div>
<svg style="left:371px;top:13.600px" width="4.500" height="4.500" viewBox="0 0 9 9"><circle cx="3.400" cy="3.400" r="2.400" fill="none" stroke="#c4c4c4" stroke-width="1.400"/><path d="M5.300 5.300l3 3" stroke="#c4c4c4" stroke-width="1.700"/></svg>
<svg style="left:529.800px;top:12px" width="7.500" height="7.500" viewBox="0 0 15 15"><rect x="4" y="1" width="10" height="9.500" rx="1.500" fill="none" stroke="#bdbdbd" stroke-width="1.400"/><circle cx="4.800" cy="10.500" r="3" fill="#3c3c3c" stroke="#bdbdbd" stroke-width="1.300"/><path d="M9 3v5M6.500 5.500h5" stroke="#bdbdbd" stroke-width="1.200"/></svg>
<div class="a" style="left:539.5px;top:11.300px;width:13.700px;height:9.200px;background:#404040"></div>
<div class="a" style="left:554px;top:11.300px;width:13.700px;height:9.200px;background:#404040"></div>
<div class="a" style="left:568.1px;top:11.300px;width:13.700px;height:9.200px;background:#404040"></div>
<div class="a" style="left:582.1px;top:11.300px;width:13.700px;height:9.200px;background:#404040"></div>
<svg style="left:542.800px;top:12.300px" width="7" height="7" viewBox="0 0 14 14"><circle cx="5" cy="3.500" r="2.600" fill="#d0d0d0"/><rect x="2" y="7" width="6" height="6" fill="#d0d0d0"/><path d="M9 6l4.500 7h-6z" fill="#d0d0d0"/></svg>
<svg style="left:556.600px;top:12.800px" width="7" height="6" viewBox="0 0 14 12"><path d="M1 7l6-6h5.500v5.500l-6 5.500z" fill="#d0d0d0" transform="rotate(0)"/><circle cx="10" cy="3.500" r="1.100" fill="#424242"/></svg>
<svg style="left:570.600px;top:12.600px" width="6.600" height="6.400" viewBox="0 0 14 13"><path d="M7 0l2.100 4.500 4.900.6-3.600 3.300 1 4.800-4.400-2.500-4.400 2.500 1-4.800L0 5.100l4.900-.6z" fill="#8a8a8a"/></svg>
<svg style="left:583.600px;top:12.700px" width="8" height="6.400" viewBox="0 0 16 12"><path d="M1 6q5.500-6 11 0-5.500 6-11 0z" fill="none" stroke="#d0d0d0" stroke-width="1.400"/><circle cx="6.500" cy="6" r="1.800" fill="#d0d0d0"/><path d="M1.500 11.500l11-11" stroke="#d0d0d0" stroke-width="1.600"/></svg>
<div class="t" style="left:592px;top:11.9px;font-size:6.8px;letter-spacing:0.000px;color:#d0d0d0;">6</div>
<div class="a" style="left:0;top:21.400px;width:129.300px;height:143.800px;background:#383838"></div>
<div class="a" style="left:130px;top:21.400px;width:469px;height:143.800px;background:#333"></div>
<div class="a" style="left:129.300px;top:21.400px;width:.8px;height:143.800px;background:#232323"></div>
<div class="a" style="left:0;top:21.300px;width:599px;height:.6px;background:#2a2a2a"></div>
<div class="a" style="left:130px;top:21.900px;width:469px;height:9.800px;background:#3c3c3c"></div>
<div class="t" style="left:132px;top:22.8px;font-size:6.7px;letter-spacing:0.054px;color:#b4b4b4;">Assets</div>
<div class="t" style="left:161.8px;top:22.8px;font-size:6.7px;letter-spacing:-0.139px;color:#b4b4b4;">FBX</div>
<div class="t" style="left:183.7px;top:22.8px;font-size:6.7px;letter-spacing:0.140px;color:#b4b4b4;">FBX_05_Interior</div>
<div class="t" style="left:244px;top:22.8px;font-size:6.7px;letter-spacing:0.338px;color:#b4b4b4;">Texture</div>
<div class="t b" style="left:278px;top:22.8px;font-size:6.7px;letter-spacing:0.356px;color:#e0e0e0;">Materials</div>
<svg style="left:155.6px;top:24.500px" width="3.200" height="4.600" viewBox="0 0 6 9"><path d="M1 1l3.500 3.500-3.500 3.500" fill="none" stroke="#c0c0c0" stroke-width="1.700"/></svg>
<svg style="left:177.3px;top:24.500px" width="3.200" height="4.600" viewBox="0 0 6 9"><path d="M1 1l3.500 3.500-3.500 3.500" fill="none" stroke="#c0c0c0" stroke-width="1.700"/></svg>
<svg style="left:237.6px;top:24.500px" width="3.200" height="4.600" viewBox="0 0 6 9"><path d="M1 1l3.500 3.500-3.500 3.500" fill="none" stroke="#c0c0c0" stroke-width="1.700"/></svg>
<svg style="left:271.5px;top:24.500px" width="3.200" height="4.600" viewBox="0 0 6 9"><path d="M1 1l3.500 3.500-3.500 3.500" fill="none" stroke="#c0c0c0" stroke-width="1.700"/></svg>
<svg style="left:138.100px;top:32.50px" width="7.800" height="7.800" viewBox="0 0 16 16"><circle cx="8" cy="8" r="7" fill="#2f7fb5" stroke="#a5d8f0" stroke-width="1.500"/><circle cx="6.600" cy="6.400" r="4.300" fill="#8fd9f8"/><circle cx="5.600" cy="5.400" r="1.800" fill="#c4ecfc"/></svg>
<div class="t" style="left:147.6px;top:33.4px;font-size:6.7px;letter-spacing:-0.018px;color:#c8c8c8;">TEX_Desk_Black</div>
<svg style="left:138.100px;top:41.03px" width="7.800" height="7.800" viewBox="0 0 16 16"><circle cx="8" cy="8" r="7" fill="#2f7fb5" stroke="#a5d8f0" stroke-width="1.500"/><circle cx="6.600" cy="6.400" r="4.300" fill="#8fd9f8"/><circle cx="5.600" cy="5.400" r="1.800" fill="#c4ecfc"/></svg>
<div class="t" style="left:147.6px;top:41.93px;font-size:6.7px;letter-spacing:0.044px;color:#c8c8c8;">TEX_Desk_White</div>
<div class="a" style="left:130px;top:155.100px;width:469px;height:10.100px;background:#3a3a3a"></div>
<div class="a" style="left:564px;top:159.500px;width:27px;height:1.500px;background:#5c5c5c"></div>
<div class="a" style="left:561px;top:157.600px;width:5.300px;height:5.300px;border-radius:50%;background:#adadad"></div>
<svg style="left:2.8px;top:23.8px" width="4" height="5" viewBox="0 0 8 10"><path d="M0 0l8 5-8 5z" fill="#6a6a6a"/></svg>
<svg style="left:10.00px;top:23.00px" width="6" height="5.800" viewBox="0 0 14 13"><path d="M7 0l2.100 4.500 4.900.6-3.600 3.300 1 4.800-4.400-2.500-4.400 2.500 1-4.800L0 5.100l4.900-.6z" fill="#d6d6d6"/></svg>
<div class="t b" style="left:18.7px;top:22.2px;font-size:6.7px;letter-spacing:0.194px;color:#e0e0e0;">Favorites</div>
<svg style="left:2.3px;top:41.0px" width="5" height="4" viewBox="0 0 10 8"><path d="M0 0h10l-5 8z" fill="#6a6a6a"/></svg>
<svg style="left:9.3px;top:39.8px" width="8" height="6" viewBox="0 0 16 12"><path d="M.5 1.200q0-.7.700-.7h4l1.300 1.700h6.300q.7 0 .7.700v1.600h-9.500l-3.500 6z" fill="#d6d6d6"/><path d="M1 11.500l3.300-6.200h11.200l-3.300 6.200z" fill="#d6d6d6"/></svg>
<div class="t b" style="left:18.7px;top:38.8px;font-size:6.7px;letter-spacing:0.077px;color:#e0e0e0;">Assets</div>
<svg style="left:9.77px;top:49.5px" width="5" height="4" viewBox="0 0 10 8"><path d="M0 0h10l-5 8z" fill="#6a6a6a"/></svg>
<svg style="left:16.77px;top:48.3px" width="8" height="6" viewBox="0 0 16 12"><path d="M.5 1.200q0-.7.700-.7h4l1.300 1.700h6.300q.7 0 .7.700v1.600h-9.500l-3.500 6z" fill="#d6d6d6"/><path d="M1 11.500l3.300-6.200h11.200l-3.300 6.200z" fill="#d6d6d6"/></svg>
<div class="t" style="left:26.17px;top:47.3px;font-size:6.7px;letter-spacing:-0.172px;color:#c8c8c8;">FBX</div>
<svg style="left:17.24px;top:58.1px" width="5" height="4" viewBox="0 0 10 8"><path d="M0 0h10l-5 8z" fill="#6a6a6a"/></svg>
<svg style="left:24.24px;top:56.9px" width="8" height="6" viewBox="0 0 16 12"><path d="M.5 1.200q0-.7.700-.7h4l1.300 1.700h6.300q.7 0 .7.700v1.600h-9.500l-3.500 6z" fill="#d6d6d6"/><path d="M1 11.500l3.300-6.200h11.200l-3.300 6.200z" fill="#d6d6d6"/></svg>
<div class="t" style="left:33.64px;top:55.9px;font-size:6.7px;letter-spacing:0.140px;color:#c8c8c8;">FBX_05_Interior</div>
<svg style="left:24.71px;top:66.6px" width="5" height="4" viewBox="0 0 10 8"><path d="M0 0h10l-5 8z" fill="#6a6a6a"/></svg>
<svg style="left:31.71px;top:65.4px" width="8" height="6" viewBox="0 0 16 12"><path d="M.5 1.200q0-.7.700-.7h4l1.300 1.700h6.300q.7 0 .7.700v1.600h-9.500l-3.500 6z" fill="#d6d6d6"/><path d="M1 11.500l3.300-6.200h11.200l-3.300 6.200z" fill="#d6d6d6"/></svg>
<div class="t" style="left:41.11px;top:64.4px;font-size:6.7px;letter-spacing:0.352px;color:#c8c8c8;">Texture</div>
<div class="a" style="left:0;top:72.60px;width:129.300px;height:8.500px;background:#4d4d4d"></div>
<svg style="left:39.38px;top:73.9px" width="7.500" height="6" viewBox="0 0 15 12"><path d="M.5 1.200q0-.7.700-.7h4.300l1.300 1.700h7q.7 0 .7.700v7.900q0 .7-.7.700h-12.600q-.7 0-.7-.7z" fill="#d6d6d6"/></svg>
<div class="t" style="left:48.58px;top:72.9px;font-size:6.7px;letter-spacing:0.195px;color:#c8c8c8;">Materials</div>
<svg style="left:9.77px;top:83.7px" width="5" height="4" viewBox="0 0 10 8"><path d="M0 0h10l-5 8z" fill="#6a6a6a"/></svg>
<svg style="left:16.77px;top:82.5px" width="8" height="6" viewBox="0 0 16 12"><path d="M.5 1.200q0-.7.700-.7h4l1.300 1.700h6.300q.7 0 .7.700v1.600h-9.500l-3.500 6z" fill="#d6d6d6"/><path d="M1 11.500l3.300-6.200h11.200l-3.300 6.200z" fill="#d6d6d6"/></svg>
<div class="t" style="left:26.17px;top:81.5px;font-size:6.7px;letter-spacing:-0.052px;color:#c8c8c8;">Prefabs</div>
<svg style="left:24.44px;top:91.0px" width="7.500" height="6" viewBox="0 0 15 12"><path d="M.5 1.200q0-.7.700-.7h4.300l1.300 1.700h7q.7 0 .7.700v7.900q0 .7-.7.700h-12.600q-.7 0-.7-.7z" fill="#d6d6d6"/></svg>
<div class="t" style="left:33.64px;top:90.0px;font-size:6.7px;letter-spacing:0.139px;color:#c8c8c8;">Prefabs_05_Interior</div>
<svg style="left:16.97px;top:99.5px" width="7.500" height="6" viewBox="0 0 15 12"><path d="M.5 1.200q0-.7.700-.7h4.300l1.300 1.700h7q.7 0 .7.700v7.900q0 .7-.7.700h-12.600q-.7 0-.7-.7z" fill="#d6d6d6"/></svg>
<div class="t" style="left:26.17px;top:98.5px;font-size:6.7px;letter-spacing:-0.035px;color:#c8c8c8;">Scenes</div>
<svg style="left:10.27px;top:108.7px" width="4" height="5" viewBox="0 0 8 10"><path d="M0 0l8 5-8 5z" fill="#6a6a6a"/></svg>
<svg style="left:16.97px;top:108.1px" width="7.500" height="6" viewBox="0 0 15 12"><path d="M.5 1.200q0-.7.700-.7h4.300l1.300 1.700h7q.7 0 .7.700v7.900q0 .7-.7.700h-12.600q-.7 0-.7-.7z" fill="#d6d6d6"/></svg>
<div class="t" style="left:26.17px;top:107.1px;font-size:6.7px;letter-spacing:0.271px;color:#c8c8c8;">Toon</div>
<svg style="left:2.8px;top:117.2px" width="4" height="5" viewBox="0 0 8 10"><path d="M0 0l8 5-8 5z" fill="#6a6a6a"/></svg>
<svg style="left:9.5px;top:116.6px" width="7.500" height="6" viewBox="0 0 15 12"><path d="M.5 1.200q0-.7.700-.7h4.300l1.300 1.700h7q.7 0 .7.700v7.900q0 .7-.7.700h-12.600q-.7 0-.7-.7z" fill="#d6d6d6"/></svg>
<div class="t b" style="left:18.7px;top:115.6px;font-size:6.7px;letter-spacing:0.191px;color:#e0e0e0;">Packages</div>
</div>
<div class="a" id="status" style="left:0;top:538px;width:1024px;height:12px;background:#1a1a1a">
<svg style="left:970.700px;top:2.700px" width="7.800" height="7.800" viewBox="0 0 14 14"><ellipse cx="7" cy="8" rx="3.300" ry="4.200" fill="#c4c4c4"/><path d="M2 4l3 2M12 4l-3 2M1.500 8h3M12.500 8h-3M2 12l3-2M12 12l-3-2M5 3a2 2 0 0 1 4 0" stroke="#c4c4c4" stroke-width="1.100" fill="none"/><path d="M1.500 13l11-12" stroke="#c4c4c4" stroke-width="1.300"/></svg>
<svg style="left:984.600px;top:2.900px" width="7.400" height="7.400" viewBox="0 0 14 14"><path d="M1 3.500l6-2.500 6 2.500-6 2.500zM1 7l6 2.500 6-2.500M1 10.200l6 2.500 6-2.500" fill="#c4c4c4" stroke="#c4c4c4" stroke-width="1"/></svg>
<svg style="left:998.900px;top:2.700px" width="7.800" height="7.800" viewBox="0 0 14 14"><path d="M1 4v-3h3M13 4v-3h-3M1 10v3h3M13 10v3h-3" fill="none" stroke="#c4c4c4" stroke-width="1.300"/><circle cx="7" cy="7" r="3" fill="#c4c4c4"/><path d="M3 12l8-10" stroke="#c4c4c4" stroke-width="1.200"/></svg>
<svg style="left:1012.300px;top:2.400px" width="8.400" height="8.400" viewBox="0 0 14 14"><circle cx="7" cy="7" r="5.800" fill="none" stroke="#c4c4c4" stroke-width="1.300"/><path d="M4.200 7.200l2 2 3.600-4" fill="none" stroke="#c4c4c4" stroke-width="1.400"/></svg>
</div>
</body></html>
